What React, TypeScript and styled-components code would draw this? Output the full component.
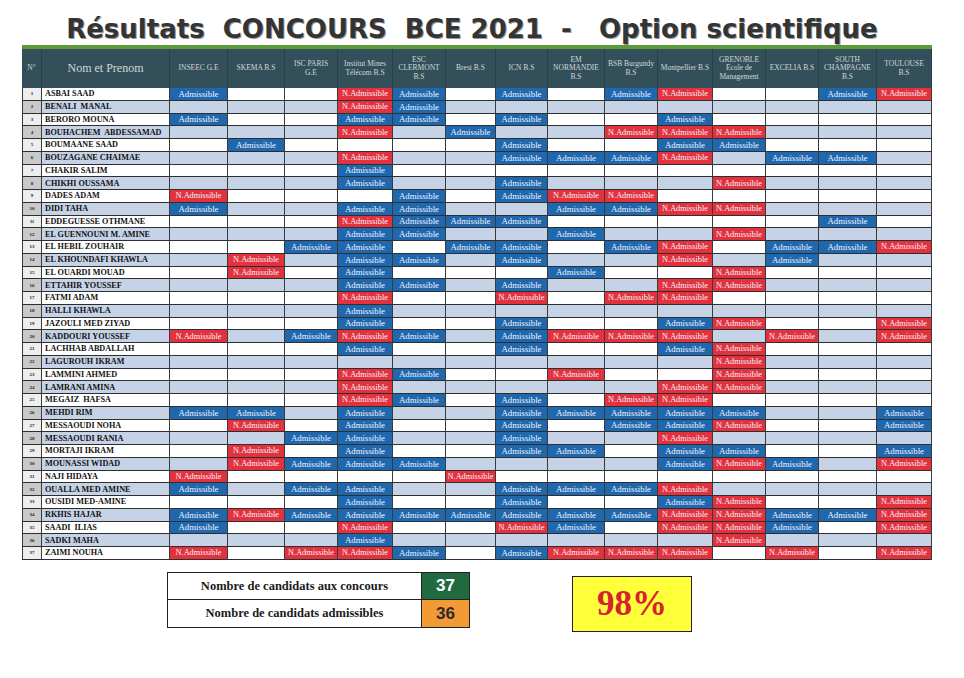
import React from "react";
import styled, { createGlobalStyle } from "styled-components";

const GlobalStyle = createGlobalStyle`
  html, body { margin: 0; padding: 0; background: #ffffff; }
  body { font-family: "Liberation Serif", "Times New Roman", serif; }
`;

const GRID = "20px 128px 58px 57px 53px 55px 53px 50px 52px 57px 53px 55px 53px 53px 58px 55px";

const Page = styled.div`
  width: 964px;
  height: 678px;
  display: flex;
  flex-direction: column;
  overflow: hidden;
  background: #ffffff;
`;

const Title = styled.h1`
  margin: 0;
  height: 45px;
  box-sizing: border-box;
  padding: 13px 20px 0 0;
  line-height: 32px;
  text-align: center;
  white-space: pre;
  font-family: "DejaVu Sans", "Liberation Sans", sans-serif;
  font-weight: 700;
  font-size: 26px;
  color: #343434;
  text-shadow: 1px 1px 0 #9a9a9a;
`;

const Sheet = styled.div`
  margin-left: 22px;
  width: 910px;
  border-top: 4px solid #5c9a3c;
`;

const HeaderRow = styled.div`
  display: grid;
  grid-template-columns: ${GRID};
  height: 39px;
  background: #33505a;
`;

const HeadCell = styled.div<{ $big?: boolean }>`
  display: flex;
  align-items: center;
  justify-content: center;
  text-align: center;
  white-space: pre-line;
  box-sizing: border-box;
  border-right: 1px solid #27404a;
  color: #cfd8d8;
  font-family: "Liberation Serif", serif;
  font-size: ${(p) => (p.$big ? "12px" : "7.5px")};
  line-height: ${(p) => (p.$big ? "13px" : "8.5px")};
  padding: 0 1px;
`;

const Row = styled.div<{ $even: boolean }>`
  display: grid;
  grid-template-columns: ${GRID};
  height: 12.75px;
  background: ${(p) => (p.$even ? "#c6d3e7" : "#ffffff")};
`;

const BaseCell = styled.div`
  box-sizing: border-box;
  border-right: 1px solid #3a3a3a;
  border-bottom: 1px solid #2e2e2e;
  display: flex;
  align-items: center;
  overflow: hidden;
  white-space: nowrap;
`;

const NumCell = styled(BaseCell)<{ $even: boolean }>`
  justify-content: center;
  background: ${(p) => (p.$even ? "#c9c9c9" : "#eeeeee")};
  border-left: 1px solid #3a3a3a;
  font-size: 5px;
  font-weight: 700;
  color: #222;
`;

const NameCell = styled(BaseCell)`
  padding-left: 3px;
  font-family: "Liberation Serif", serif;
  font-weight: 700;
  font-size: 8.2px;
  color: #111;
  white-space: pre;
`;

const ResultCell = styled(BaseCell)<{ $kind: string }>`
  justify-content: center;
  font-family: "Liberation Serif", serif;
  font-size: ${(p) => (p.$kind === "N" ? "8.3px" : "8.8px")};
  color: #f4f4ff;
  background: ${(p) =>
    p.$kind === "A" ? "#1f68ad" : p.$kind === "N" ? "#e2323d" : "transparent"};
`;

const Footer = styled.div`
  display: flex;
  align-items: flex-start;
  gap: 102px;
  margin-top: 12px;
  padding-left: 167px;
`;

const CountBox = styled.div`
  width: 303px;
  box-sizing: border-box;
  border: 1.5px solid #222;
`;

const CountRow = styled.div`
  display: grid;
  grid-template-columns: 1fr 47px;
  height: 26.5px;
  & + & { border-top: 1px solid #222; }
`;

const CountLabel = styled.div`
  display: flex;
  align-items: center;
  justify-content: center;
  border-right: 1px solid #222;
  font-family: "Liberation Serif", serif;
  font-weight: 700;
  font-size: 12.5px;
  color: #1a1a1a;
`;

const CountValue = styled.div<{ $bg: string; $fg: string }>`
  display: flex;
  align-items: center;
  justify-content: center;
  background: ${(p) => p.$bg};
  color: ${(p) => p.$fg};
  font-family: "Liberation Sans", Arial, sans-serif;
  font-weight: 700;
  font-size: 17px;
`;

const Percent = styled.div`
  margin-top: 4px;
  width: 120px;
  height: 56px;
  box-sizing: border-box;
  border: 1.5px solid #222;
  background: #ffff3a;
  display: flex;
  align-items: center;
  justify-content: center;
  font-family: "Liberation Serif", serif;
  font-weight: 700;
  font-size: 35px;
  color: #d62230;
`;

const COLUMNS = [
  "INSEEC G.E",
  "SKEMA B.S",
  "ISC PARIS\nG.E",
  "Institut Mines\nTélécom B.S",
  "ESC\nCLERMONT\nB.S",
  "Brest B.S",
  "ICN B.S",
  "EM\nNORMANDIE\nB.S",
  "BSB Burgundy\nB.S",
  "Montpellier B.S",
  "GRENOBLE\nEcole de\nManagement",
  "EXCELIA B.S",
  "SOUTH\nCHAMPAGNE\nB.S",
  "TOULOUSE\nB.S",
];

const ROWS: [string, string][] = [
  ["ASBAI SAAD", "A..NA.A.AN..AN"],
  ["BENALI  MANAL", "...NA........."],
  ["BERORO MOUNA", "A..AA.A..A...."],
  ["BOUHACHEM  ABDESSAMAD", "...N.A..NNN..."],
  ["BOUMAANE SAAD", ".A....A..AA..."],
  ["BOUZAGANE CHAIMAE", "...N..AAAN.AA."],
  ["CHAKIR SALIM", "...A.........."],
  ["CHIKHI OUSSAMA", "...A..A...N..."],
  ["DADES ADAM", "N...A.ANN....."],
  ["DIDI TAHA", "A..AA..AANN..."],
  ["EDDEGUESSE OTHMANE", "...NAAA.....A."],
  ["EL GUENNOUNI M. AMINE", "...AA..A..N..."],
  ["EL HEBIL ZOUHAIR", "..AA.AA.AN.AAN"],
  ["EL KHOUNDAFI KHAWLA", ".N.AA.A..N.A.."],
  ["EL OUARDI MOUAD", ".N.A...A..N..."],
  ["ETTAHIR YOUSSEF", "...AA.A..NN..."],
  ["FATMI ADAM", "...N..N.NN...."],
  ["HALLI KHAWLA", "...A.........."],
  ["JAZOULI MED ZIYAD", "...A..A..AN..N"],
  ["KADDOURI YOUSSEF", "N.ANA.ANNN.N.N"],
  ["LACHHAB ABDALLAH", "...A..A..AN..."],
  ["LAGUROUH IKRAM", "..........N..."],
  ["LAMMINI AHMED", "...NA..N..N..."],
  ["LAMRANI AMINA", "...N.....NN..."],
  ["MEGAIZ  HAFSA", "...NA.A.NN...."],
  ["MEHDI RIM", "AA.A..AAAAA..A"],
  ["MESSAOUDI NOHA", ".N.A..A.AAN..A"],
  ["MESSAOUDI RANIA", "..AA..A..N...."],
  ["MORTAJI IKRAM", ".N.A..AA.AA..A"],
  ["MOUNASSI WIDAD", ".NAAA....ANA.N"],
  ["NAJI HIDAYA", "N....N........"],
  ["OUALLA MED AMINE", "A.AA..AAAN...."],
  ["OUSIDI MED-AMINE", "...A..A..AN..N"],
  ["RKHIS HAJAR", "ANAAAAAAANNAAN"],
  ["SAADI  ILIAS", "A..N..NA.NNA.N"],
  ["SADKI MAHA", "...A......N..."],
  ["ZAIMI NOUHA", "N.NNA.ANNN.N.N"],
];

const label = (k: string) => (k === "A" ? "Admissible" : k === "N" ? "N.Admissible" : "");

export default function App() {
  return (
    <>
      <GlobalStyle />
      <Page>
        <Title>{"Résultats  CONCOURS  BCE 2021  -   Option scientifique"}</Title>
        <Sheet>
          <HeaderRow>
            <HeadCell>N°</HeadCell>
            <HeadCell $big>Nom et Prenom</HeadCell>
            {COLUMNS.map((c) => (
              <HeadCell key={c}>{c}</HeadCell>
            ))}
          </HeaderRow>
          {ROWS.map(([name, res], i) => {
            const even = i % 2 === 1;
            return (
              <Row key={name} $even={even}>
                <NumCell $even={even}>{i + 1}</NumCell>
                <NameCell>{name}</NameCell>
                {res.split("").map((k, j) => (
                  <ResultCell key={j} $kind={k}>
                    {label(k)}
                  </ResultCell>
                ))}
              </Row>
            );
          })}
        </Sheet>
        <Footer>
          <CountBox>
            <CountRow>
              <CountLabel>Nombre de candidats aux concours</CountLabel>
              <CountValue $bg="#206a3f" $fg="#ffffff">37</CountValue>
            </CountRow>
            <CountRow>
              <CountLabel>Nombre de candidats admissibles</CountLabel>
              <CountValue $bg="#f29a36" $fg="#2b2b2b">36</CountValue>
            </CountRow>
          </CountBox>
          <Percent>98%</Percent>
        </Footer>
      </Page>
    </>
  );
}
